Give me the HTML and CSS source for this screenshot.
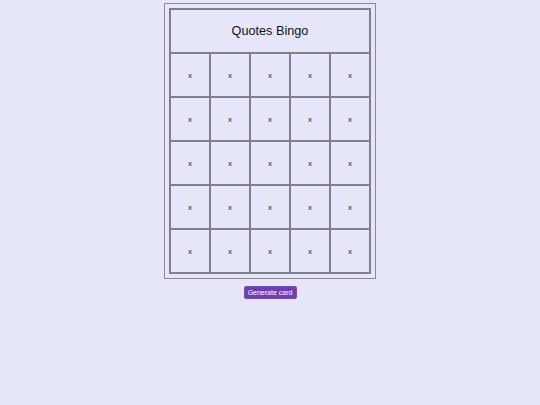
FILE: index.html
```html
<!DOCTYPE html>
<html>
<head>
<meta charset="utf-8">
<link rel="stylesheet" href="styles.css">
</head>
<body>
<div class="page">
  <div class="card">
    <table class="bingo">
      <tr><th colspan="5" class="title">Quotes Bingo</th></tr>
      <tr><td>x</td><td>x</td><td>x</td><td>x</td><td>x</td></tr>
      <tr><td>x</td><td>x</td><td>x</td><td>x</td><td>x</td></tr>
      <tr><td>x</td><td>x</td><td>x</td><td>x</td><td>x</td></tr>
      <tr><td>x</td><td>x</td><td>x</td><td>x</td><td>x</td></tr>
      <tr><td>x</td><td>x</td><td>x</td><td>x</td><td>x</td></tr>
    </table>
  </div>
  <button class="gen">Generate card</button>
</div>
</body>
</html>
```
FILE: styles.css
```css
html, body {
  margin: 0;
  padding: 0;
  background: #e6e6fa;
  font-family: "Liberation Sans", Arial, sans-serif;
}
.page {
  display: flex;
  flex-direction: column;
  align-items: center;
  padding-top: 3px;
}
.card {
  border: 1px solid #8a8a96;
  padding: 4px;
  width: 202px;
}
.bingo {
  border: 1px solid #808088;
  border-spacing: 0;
  width: 202px;
  table-layout: fixed;
}
.bingo th, .bingo td {
  border: 1px solid #808088;
  padding: 0;
  height: 42px;
  text-align: center;
  vertical-align: middle;
  color: #222;
}
.bingo td {
  width: 38px;
  font-size: 8px;
  color: #2a2a2a;
}
.bingo .title {
  font-size: 12.7px;
  font-weight: normal;
  color: #111;
  line-height: 14px;
}
.gen {
  margin-top: 7px;
  background: #6c3db4;
  color: #fff;
  border: 1px solid #7a4cc4;
  border-radius: 2px;
  font-family: "Liberation Sans", Arial, sans-serif;
  font-size: 7px;
  padding: 0;
  height: 13px;
  line-height: 11px;
  width: 53px;
  white-space: nowrap;
}
```
